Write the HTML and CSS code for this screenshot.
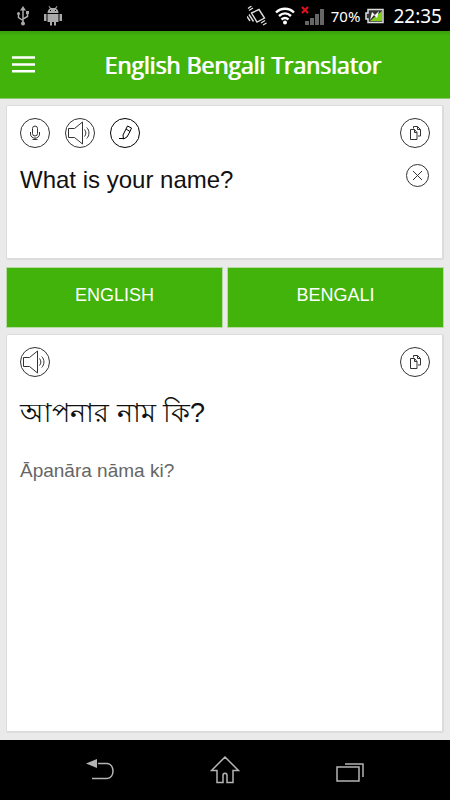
FILE: index.html
```html
<!DOCTYPE html>
<html lang="en">
<head>
<meta charset="utf-8">
<meta name="viewport" content="width=device-width, initial-scale=1">
<title>English Bengali Translator</title>
<link rel="stylesheet" href="styles.css">
</head>
<body>
<svg class="defs" width="0" height="0" aria-hidden="true">
  <symbol id="speaker" viewBox="0 0 30 30">
    <circle cx="15" cy="15" r="14.5"/>
    <path d="M3.500 10.500h6L17.500 4v22L9.500 19.500h-6z"/>
    <path d="M19.500 11.500c1.800 2 1.800 5 0 7M21.700 9.500c3 3 3 8 0 11"/>
  </symbol>
  <symbol id="copy" viewBox="0 0 30 30">
    <circle cx="15" cy="15" r="14.5"/>
    <path d="M13.500 10.500V8.500h4l3 3v6.500h-2.500M17.500 8.500v3h3"/>
    <path d="M10.500 11.500h4l2.500 3v7h-6.500zM14.500 11.500v3h2.500"/>
  </symbol>
</svg>
<div class="status">
  <svg width="14" height="22" viewBox="0 0 14 22" fill="none" stroke="#aaa" stroke-width="1.5">
    <path d="M7 4v14M2.500 9v3.500l4.500 3M11.500 8v3.500L7 14"/>
    <path d="M7 1l3 4.500H4z" fill="#aaa" stroke="none"/>
    <circle cx="7" cy="18.500" r="2" fill="#aaa" stroke="none"/>
    <circle cx="2.500" cy="8.500" r="1.500" fill="#aaa" stroke="none"/>
    <path d="M10 6h3v3h-3z" fill="#aaa" stroke="none"/>
  </svg>
  <svg class="android" width="20" height="22" viewBox="0 0 20 22" fill="#aaa">
    <path d="M4.500 8C4.500 5.500 6 4 7 3.500L5.500 1.500l.7-.5L8 3h4l1.800-2 .7.5L13 3.500c1 .5 2.500 2 2.500 4.500zM4.500 9h11v8H13v3.500h-2V17H9v3.500H7V17H4.500zM1 9h2.500v7H1zM16.500 9H19v7h-2.500z"/>
    <path d="M7 5h1v1H7zM12 5h1v1h-1z" fill="#000"/>
  </svg>
  <span class="spacer"></span>
  <svg width="20" height="20" viewBox="0 0 20 20" fill="none" stroke="#ddd" stroke-width="1.400">
    <path d="M4.500 7L12 3.500l5.500 8.500-7.500 4zM2 8.500l4.500 7M0 10.500l3 4.500M6 2L2 4.500M4.500 0L1 2.500M14 17l4-2.500M16 19l3.500-2"/>
  </svg>
  <svg class="wifi" width="20" height="18" viewBox="0 0 20 18" fill="none" stroke="#fff" stroke-width="2.400">
    <path d="M1 5.500c5-5 13-5 18 0M4 9c4-3.500 8-3.500 12 0M6.500 12.500c2.500-2 4.500-2 7 0"/>
    <circle cx="10" cy="15.500" r="2" fill="#fff" stroke="none"/>
  </svg>
  <svg class="signal" width="24" height="20" viewBox="0 0 24 20" fill="#666">
    <path d="M4 15h4v4H4zM9 12h4v7H9zM14 8h4v11h-4zM19 3h4v16h-4z"/>
    <path d="M1 1l6 6M7 1L1 7" stroke="#e0101a" stroke-width="2.200"/>
  </svg>
  <span class="percent">70%</span>
  <svg class="battery" width="19" height="16" viewBox="0 0 19 16">
    <path d="M3 1.500h15v13H3V11H1V5h2z" fill="#333" stroke="#ddd" stroke-width="1.500"/>
    <path d="M17 3v10H5z" fill="#80d018"/>
    <path d="M5 12l2-8 3 3 4-4-2 7-3-3z" fill="#fff"/>
  </svg>
  <time class="clock">22:35</time>
</div>
<header class="bar">
  <button class="menu" aria-label="Menu">
    <svg width="23" height="17" viewBox="0 0 23 17" fill="#fff"><path d="M0 .3h23v2.500H0zM0 7.200h23v2.500H0zM0 14h23v2.500H0z"/></svg>
  </button>
  <h1>English Bengali Translator</h1>
</header>
<main>
  <section class="card source">
    <div class="tools">
      <button aria-label="Speak"><svg class="icon" viewBox="0 0 30 30">
        <circle cx="15" cy="15" r="14.5"/>
        <rect x="12.500" y="8" width="5" height="10" rx="2.500"/>
        <path d="M10.500 14v2c0 5.500 9 5.500 9 0v-2M15 20v2M12.500 21.500h5"/>
      </svg></button>
      <button aria-label="Listen"><svg class="icon"><use href="#speaker"/></svg></button>
      <button aria-label="Draw"><svg class="icon dark" viewBox="0 0 30 30">
        <circle cx="15" cy="15" r="14.5"/>
        <path d="M16 11l1.500-3 4 2-1.500 3.500M16 11l4 2.500-3 5.500-3.500 2-.5-4zM13.500 20.500H9"/>
      </svg></button>
      <button class="end" aria-label="Copy"><svg class="icon"><use href="#copy"/></svg></button>
    </div>
    <div class="entry">
      <textarea aria-label="Text to translate" rows="2">What is your name?</textarea>
      <button aria-label="Clear"><svg class="icon small" viewBox="0 0 23 23">
        <circle cx="11.500" cy="11.500" r="11"/><path d="M7 7l9 9M16 7l-9 9"/>
      </svg></button>
    </div>
  </section>
  <div class="languages">
    <button>ENGLISH</button>
    <button>BENGALI</button>
  </div>
  <section class="card result">
    <div class="tools">
      <button aria-label="Listen to translation"><svg class="icon"><use href="#speaker"/></svg></button>
      <button class="end" aria-label="Copy translation"><svg class="icon"><use href="#copy"/></svg></button>
    </div>
    <p class="translation" lang="bn">আপনার নাম কি?</p>
    <p class="reading">Āpanāra nāma ki?</p>
  </section>
</main>
<nav class="keys">
  <button aria-label="Back"><svg width="30" height="30" viewBox="0 0 30 30">
    <path d="M13 8.500h9c8 0 8 15 0 15H7"/><path d="M1 8.500L12 4v9z" fill="#b4b4b4" stroke="none"/>
  </svg></button>
  <button aria-label="Home"><svg width="30" height="30" viewBox="0 0 30 30">
    <path d="M15 2L1.500 15.500H7v12h6v-7c0-3 4-3 4 0v7h6v-12h5.500z"/>
  </svg></button>
  <button aria-label="Recent apps"><svg width="30" height="30" viewBox="0 0 30 30">
    <path d="M2 12h22v14H2zM10 9h18v13"/>
  </svg></button>
</nav>
</body>
</html>
```
FILE: styles.css
```css
* { box-sizing: border-box; }
body {
  margin: 0;
  min-height: 100vh;
  display: flex;
  flex-direction: column;
  background: #eaeaea;
  font-family: "Liberation Sans", "Noto Sans", sans-serif;
}
button {
  display: block;
  padding: 0;
  border: 0;
  background: none;
  color: inherit;
  font: inherit;
}
svg { display: block; flex: none; }
h1, p { margin: 0; }
.defs { position: absolute; }
.status {
  height: 31px;
  display: flex;
  align-items: center;
  padding: 0 8px 0 16px;
  background: #000;
  color: #fff;
  font-family: "Noto Sans", sans-serif;
}
.android { margin-left: 13px; }
.spacer { flex: 1; }
.wifi { margin-left: 8px; }
.signal { margin-left: 6px; }
.percent { margin-left: 6px; font-size: 15px; }
.battery { margin-left: 5px; }
.clock { margin-left: 9px; font-size: 19px; }
.bar {
  height: 68px;
  display: flex;
  align-items: center;
  padding: 0 0 0 12px;
  background: linear-gradient(#3a9e0b, #41b30b 5px);
  border-bottom: 1px solid #8cc96d;
  color: #fff;
}
.menu { width: 23px; }
.bar h1 {
  flex: 1;
  text-align: center;
  font: 400 23px/30px "Open Sans", sans-serif;
  text-shadow: 1px 0 #fff;
}
main {
  flex: 1;
  display: flex;
  flex-direction: column;
  gap: 7px;
  padding: 6px 6px 7px;
}
.card {
  background: #fff;
  border: 1px solid #dcdcdc;
  border-width: 1px 2px 2px 1px;
  border-radius: 2px;
  padding: 12px 12px 12px 13px;
}
.source { min-height: 155px; }
.result { flex: 1; }
.tools { display: flex; gap: 15px; }
.end { margin-left: auto; }
.icon {
  width: 30px;
  height: 30px;
  fill: none;
  stroke: #333;
  stroke-width: 1;
}
.dark { stroke: #000; }
.small { width: 23px; height: 23px; }
.entry {
  display: flex;
  align-items: flex-start;
  padding: 16px 1px 0 0;
}
.entry textarea {
  flex: 1;
  min-width: 0;
  padding: 0;
  border: 0;
  outline: 0;
  resize: none;
  background: none;
  color: #111;
  font: 24px/32px "Liberation Sans", sans-serif;
}
.languages {
  display: grid;
  grid-template-columns: 1fr 1fr;
  gap: 4px;
}
.languages button {
  height: 61px;
  padding-bottom: 4px;
  background: #41b30b;
  border: 1px solid #b5dba2;
  color: #fff;
  font-size: 18px;
}
.result { margin-top: -1px; }
.translation {
  margin-top: 16px;
  color: #111;
  font-size: 27px;
  line-height: 40px;
}
.reading {
  margin-top: 24px;
  color: #666;
  font-size: 19px;
  line-height: 28px;
}
.keys {
  height: 60px;
  display: flex;
  justify-content: center;
  gap: 95px;
  align-items: center;
  background: #000;
}
.keys svg { fill: none; stroke: #b4b4b4; stroke-width: 1.5; }
```
